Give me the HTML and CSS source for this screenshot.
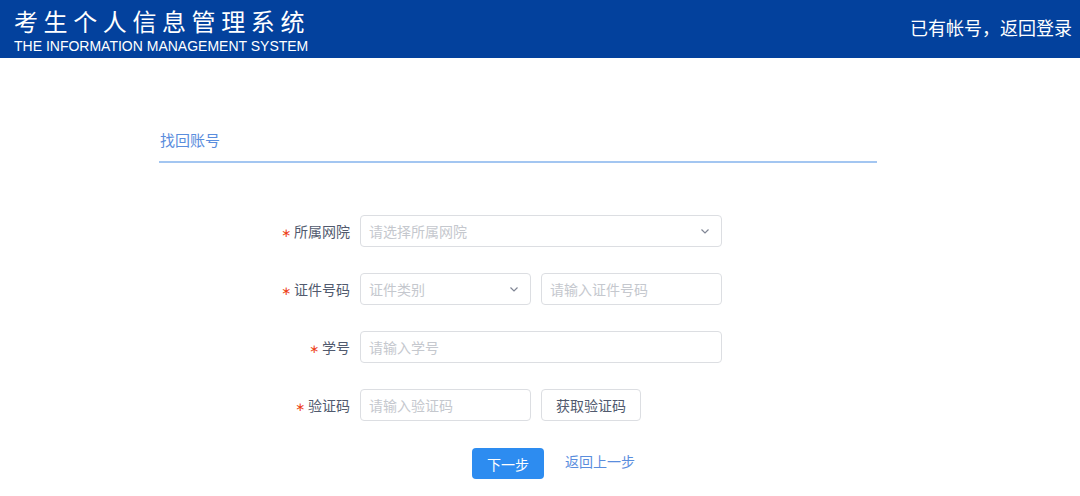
FILE: index.html
```html
<!DOCTYPE html>
<html lang="zh-CN">
    <head>
        <meta charset="UTF-8" />
        <title>找回账号</title>
        <link rel="stylesheet" href="styles.css">
    </head>

    <body>
        <!-- 상단 헤더 -->
        <div class="header">
            <div class="logo">
                <h1>考生个人信息管理系统</h1>
                <p>THE INFORMATION MANAGEMENT SYSTEM</p>
            </div>
            <a href="#" class="login">已有帐号，返回登录</a>
        </div>

        <div class="wrap">
            <h2 class="tit">找回账号</h2>

            <div class="form">
                <div class="row">
                    <label><i>∗</i>所属网院</label>
                    <div class="sel w-full">
                        <span>请选择所属网院</span>
                        <svg width="12" height="12" viewBox="0 0 12 12"><polyline points="2.5,4.5 6,8 9.5,4.5" fill="none" stroke="#808695" stroke-width="1.2"/></svg>
                    </div>
                </div>
                <div class="row">
                    <label><i>∗</i>证件号码</label>
                    <div class="sel w-half">
                        <span>证件类别</span>
                        <svg width="12" height="12" viewBox="0 0 12 12"><polyline points="2.5,4.5 6,8 9.5,4.5" fill="none" stroke="#808695" stroke-width="1.2"/></svg>
                    </div>
                    <input type="text" class="w-idno" placeholder="请输入证件号码" />
                </div>
                <div class="row">
                    <label><i>∗</i>学号</label>
                    <input type="text" class="w-full" placeholder="请输入学号" />
                </div>
                <div class="row">
                    <label><i>∗</i>验证码</label>
                    <input type="text" class="w-half" placeholder="请输入验证码" />
                    <button class="code">获取验证码</button>
                </div>
                <div class="btns">
                    <button class="next">下一步</button>
                    <a href="#" class="back">返回上一步</a>
                </div>
            </div>
        </div>
    </body>
</html>
```

FILE: styles.css
```css
body {
    margin: 0;
    font-family: "Noto Sans CJK SC", "Liberation Sans", sans-serif;
    color: #515a6e;
    background: #fff;
}

/* 헤더 */
.header {
    display: flex;
    justify-content: space-between;
    align-items: center;
    height: 58px;
    padding: 0 8px 0 14px;
    background: #03419d;
    color: #fff;
}
.logo h1 {
    margin: 2px 0 0;
    font-size: 24px;
    font-weight: 400;
    line-height: 30px;
    letter-spacing: 5.6px;
    white-space: nowrap;
}
.logo p {
    margin: 1px 0 0;
    font-family: "Liberation Sans", Arial, sans-serif;
    font-size: 14px;
    line-height: 18px;
    white-space: nowrap;
}
.login {
    margin-top: -4px;
    color: #fff;
    font-size: 18px;
    text-decoration: none;
}

/* 본문 */
.wrap {
    width: 718px;
    margin: 72px 0 0 159px;
}
.tit {
    margin: 0;
    padding: 0 0 11px 1px;
    border-bottom: 2px solid #a3c6f1;
    font-size: 15px;
    font-weight: 400;
    line-height: 20px;
    color: #5a8ddd;
}

.form {
    margin-top: 52px;
}
.row {
    display: flex;
    align-items: center;
    gap: 10px;
    margin-bottom: 26px;
}
.row label {
    width: 191px;
    text-align: right;
    font-size: 14px;
}
.row label i {
    margin-right: 3px;
    font-family: "DejaVu Sans", sans-serif;
    font-style: normal;
    font-size: 12px;
    color: #ed4014;
}

input,
.sel {
    box-sizing: border-box;
    height: 32px;
    padding: 0 8px;
    border: 1px solid #dcdee2;
    border-radius: 4px;
    font-family: inherit;
    font-size: 14px;
    color: #515a6e;
    outline: none;
}
input::placeholder {
    color: #c5c8ce;
}
.sel {
    display: flex;
    justify-content: space-between;
    align-items: center;
    color: #c5c8ce;
}
.sel svg {
    margin-right: 2px;
}
.w-full {
    width: 362px;
}
.w-half {
    width: 171px;
}
.w-idno {
    width: 181px;
}

.code {
    box-sizing: border-box;
    width: 100px;
    height: 32px;
    border: 1px solid #dcdee2;
    border-radius: 4px;
    background: #fff;
    font-family: inherit;
    font-size: 14px;
    color: #515a6e;
}

.btns {
    display: flex;
    align-items: center;
    gap: 21px;
    margin: 27px 0 0 313px;
}
.next {
    width: 72px;
    height: 31px;
    border: 0;
    border-radius: 4px;
    background: #2d8cf0;
    font-family: inherit;
    font-size: 14px;
    color: #fff;
}
.back {
    font-size: 14px;
    color: #5a8ddd;
    text-decoration: none;
    margin-top: -5px;
}
```
